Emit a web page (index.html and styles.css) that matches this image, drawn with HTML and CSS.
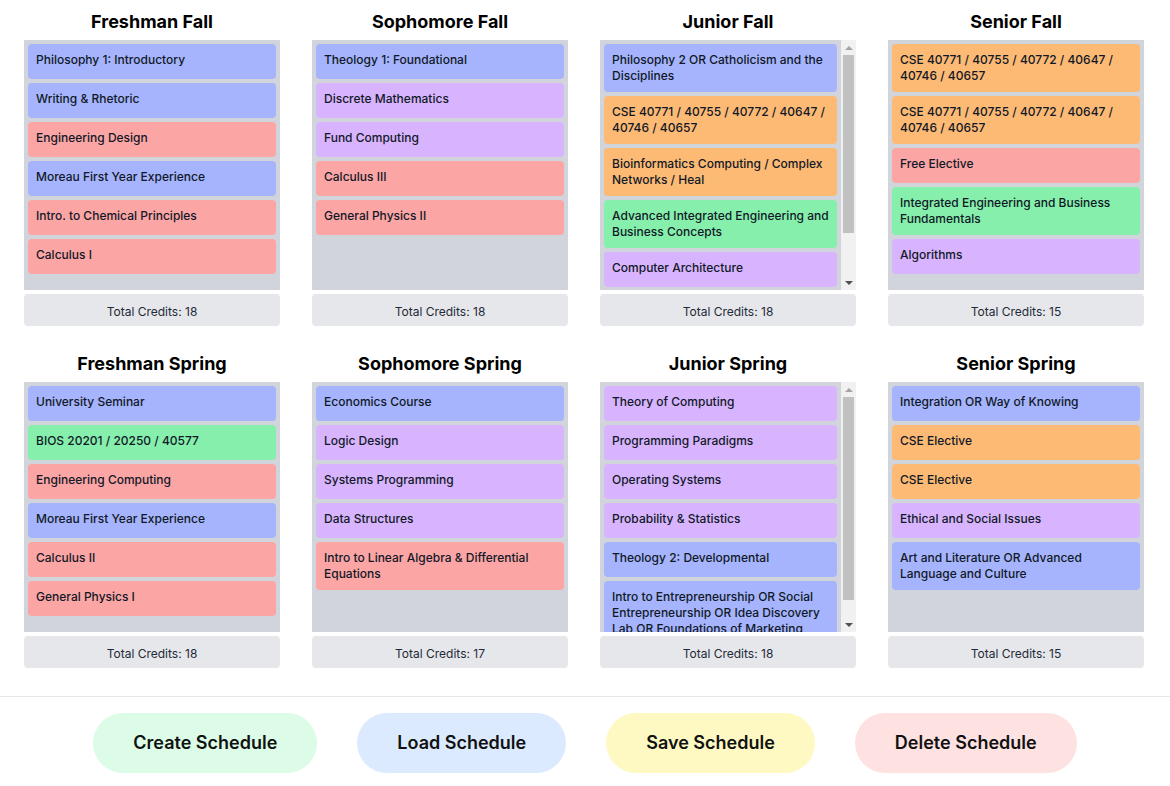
FILE: index.html
```html
<!DOCTYPE html>
<html lang="en">
<head>
<meta charset="utf-8">
<title>Four Year Plan</title>
<link rel="stylesheet" href="styles.css">
</head>
<body>
<div class="board">
  <section class="semester">
    <h2 class="title">Freshman Fall</h2>
    <div class="list">
      <div class="list-inner">
        <div class="course blue">Philosophy 1: Introductory</div>
        <div class="course blue">Writing &amp; Rhetoric</div>
        <div class="course red">Engineering Design</div>
        <div class="course blue">Moreau First Year Experience</div>
        <div class="course red">Intro. to Chemical Principles</div>
        <div class="course red">Calculus I</div>
      </div>
    </div>
    <div class="credits">Total Credits: 18</div>
  </section>
  <section class="semester">
    <h2 class="title">Sophomore Fall</h2>
    <div class="list">
      <div class="list-inner">
        <div class="course blue">Theology 1: Foundational</div>
        <div class="course purple">Discrete Mathematics</div>
        <div class="course purple">Fund Computing</div>
        <div class="course red">Calculus III</div>
        <div class="course red">General Physics II</div>
      </div>
    </div>
    <div class="credits">Total Credits: 18</div>
  </section>
  <section class="semester">
    <h2 class="title">Junior Fall</h2>
    <div class="list">
      <div class="list-inner">
        <div class="course blue">Philosophy 2 OR Catholicism and the Disciplines</div>
        <div class="course orange">CSE 40771 / 40755 / 40772 / 40647 / 40746 / 40657</div>
        <div class="course orange">Bioinformatics Computing / Complex Networks / Heal</div>
        <div class="course green">Advanced Integrated Engineering and Business Concepts</div>
        <div class="course purple">Computer Architecture</div>
      </div>
      <div class="scrollbar">
        <div class="sb-btn"><span class="arrow-up"></span></div>
        <div class="sb-track"><div class="sb-thumb" style="height: 178px"></div></div>
        <div class="sb-btn"><span class="arrow-down"></span></div>
      </div>
    </div>
    <div class="credits">Total Credits: 18</div>
  </section>
  <section class="semester">
    <h2 class="title">Senior Fall</h2>
    <div class="list">
      <div class="list-inner">
        <div class="course orange">CSE 40771 / 40755 / 40772 / 40647 / 40746 / 40657</div>
        <div class="course orange">CSE 40771 / 40755 / 40772 / 40647 / 40746 / 40657</div>
        <div class="course red">Free Elective</div>
        <div class="course green">Integrated Engineering and Business Fundamentals</div>
        <div class="course purple">Algorithms</div>
      </div>
    </div>
    <div class="credits">Total Credits: 15</div>
  </section>

  <section class="semester">
    <h2 class="title">Freshman Spring</h2>
    <div class="list">
      <div class="list-inner">
        <div class="course blue">University Seminar</div>
        <div class="course green">BIOS 20201 / 20250 / 40577</div>
        <div class="course red">Engineering Computing</div>
        <div class="course blue">Moreau First Year Experience</div>
        <div class="course red">Calculus II</div>
        <div class="course red">General Physics I</div>
      </div>
    </div>
    <div class="credits">Total Credits: 18</div>
  </section>
  <section class="semester">
    <h2 class="title">Sophomore Spring</h2>
    <div class="list">
      <div class="list-inner">
        <div class="course blue">Economics Course</div>
        <div class="course purple">Logic Design</div>
        <div class="course purple">Systems Programming</div>
        <div class="course purple">Data Structures</div>
        <div class="course red">Intro to Linear Algebra &amp; Differential Equations</div>
      </div>
    </div>
    <div class="credits">Total Credits: 17</div>
  </section>
  <section class="semester">
    <h2 class="title">Junior Spring</h2>
    <div class="list">
      <div class="list-inner">
        <div class="course purple">Theory of Computing</div>
        <div class="course purple">Programming Paradigms</div>
        <div class="course purple">Operating Systems</div>
        <div class="course purple">Probability &amp; Statistics</div>
        <div class="course blue">Theology 2: Developmental</div>
        <div class="course blue">Intro to Entrepreneurship OR Social Entrepreneurship OR Idea Discovery Lab OR Foundations of Marketing</div>
      </div>
      <div class="scrollbar">
        <div class="sb-btn"><span class="arrow-up"></span></div>
        <div class="sb-track"><div class="sb-thumb" style="height: 203px"></div></div>
        <div class="sb-btn"><span class="arrow-down"></span></div>
      </div>
    </div>
    <div class="credits">Total Credits: 18</div>
  </section>
  <section class="semester">
    <h2 class="title">Senior Spring</h2>
    <div class="list">
      <div class="list-inner">
        <div class="course blue">Integration OR Way of Knowing</div>
        <div class="course orange">CSE Elective</div>
        <div class="course orange">CSE Elective</div>
        <div class="course purple">Ethical and Social Issues</div>
        <div class="course blue">Art and Literature OR Advanced Language and Culture</div>
      </div>
    </div>
    <div class="credits">Total Credits: 15</div>
  </section>
</div>

<footer class="actions">
  <button class="btn btn-create">Create Schedule</button>
  <button class="btn btn-load">Load Schedule</button>
  <button class="btn btn-save">Save Schedule</button>
  <button class="btn btn-delete">Delete Schedule</button>
</footer>
</body>
</html>
```

FILE: styles.css
```css
* {
  box-sizing: border-box;
}

html, body {
  margin: 0;
  padding: 0;
  background: #ffffff;
}

body {
  font-family: Inter, "Noto Sans", "Liberation Sans", sans-serif;
  color: #111827;
}

.board {
  display: grid;
  grid-template-columns: repeat(4, 256px);
  column-gap: 32px;
  row-gap: 24px;
  padding: 8px 24px 0;
}

.semester {
  display: flex;
  flex-direction: column;
  min-width: 0;
}

.title {
  margin: 0 0 4px;
  font-size: 18px;
  line-height: 28px;
  font-weight: 700;
  text-align: center;
  color: #000000;
}

.list {
  height: 250px;
  background: #d1d5db;
  display: flex;
}

.list-inner {
  flex: 1;
  min-width: 0;
  padding: 4px;
  display: flex;
  flex-direction: column;
  gap: 4px;
  overflow: hidden;
}

.scrollbar {
  width: 15px;
  flex-shrink: 0;
  background: #f1f1f1;
  display: flex;
  flex-direction: column;
}

.sb-btn {
  height: 15px;
  flex-shrink: 0;
  display: flex;
  align-items: center;
  justify-content: center;
}

.sb-track {
  flex: 1;
  padding: 0 2px;
}

.sb-thumb {
  background: #c1c1c1;
}

.arrow-up {
  width: 0;
  height: 0;
  border-left: 4px solid transparent;
  border-right: 4px solid transparent;
  border-bottom: 4px solid #a3a3a3;
}

.arrow-down {
  width: 0;
  height: 0;
  margin-top: 1px;
  border-left: 4px solid transparent;
  border-right: 4px solid transparent;
  border-top: 4px solid #505050;
}

.course {
  flex-shrink: 0;
  min-height: 35px;
  padding: 8px;
  border-radius: 4px;
  font-size: 12px;
  line-height: 16px;
  font-weight: 500;
  color: #111827;
}

.blue { background: #a5b4fc; }
.purple { background: #d8b4fe; }
.red { background: #fca5a5; }
.orange { background: #fdba74; }
.green { background: #86efac; }

.credits {
  margin-top: 4px;
  background: #e5e7eb;
  border-radius: 4px;
  padding: 10px 8px 6px;
  font-size: 12px;
  line-height: 16px;
  text-align: center;
  color: #1f2937;
}

.actions {
  margin-top: 28px;
  border-top: 1px solid #e5e7eb;
  padding-top: 16px;
  display: flex;
  justify-content: center;
  gap: 40px;
}

.btn {
  border: none;
  border-radius: 9999px;
  padding: 16px 40px;
  font-family: Inter, "Noto Sans", "Liberation Sans", sans-serif;
  font-size: 18px;
  line-height: 28px;
  font-weight: 600;
  color: #111111;
  cursor: pointer;
}

.btn-create { background: #dcfce7; }
.btn-load { background: #dbeafe; }
.btn-save { background: #fef9c3; }
.btn-delete { background: #fee2e2; }
```
